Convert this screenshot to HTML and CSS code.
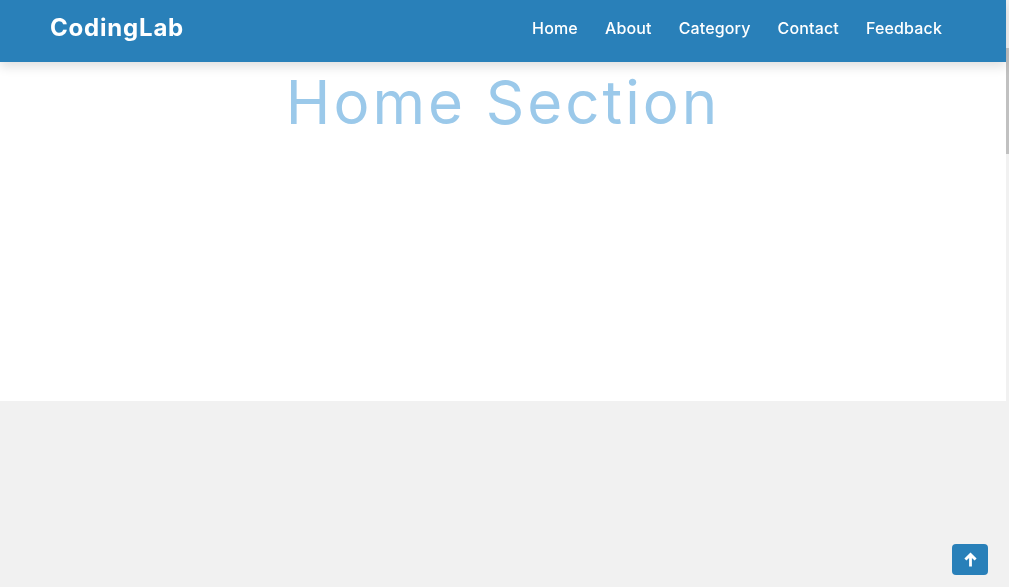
FILE: index.html
```html
<!DOCTYPE html>
<html lang="en">
<head>
<meta charset="utf-8">
<title>CodingLab</title>
<link rel="stylesheet" href="styles.css">
</head>
<body>
<div class="page">
  <header class="navbar">
    <a class="logo" href="#">CodingLab</a>
    <nav class="nav-links">
      <a href="#">Home</a>
      <a href="#">About</a>
      <a href="#">Category</a>
      <a href="#">Contact</a>
      <a href="#">Feedback</a>
    </nav>
  </header>
  <section class="home">
    <h1 class="title">Home Section</h1>
  </section>
  <section class="about"></section>
</div>
<div class="scrollbar"><div class="thumb"></div></div>
<a class="to-top" href="#" aria-label="Back to top">
  <svg width="13" height="15" viewBox="0 0 13 15" aria-hidden="true">
    <path d="M6.5 0.5 L12.6 6.6 L10.6 8.6 L7.9 5.9 L7.9 14.5 L5.1 14.5 L5.1 5.9 L2.4 8.6 L0.4 6.6 Z" fill="#fff"/>
  </svg>
</a>
</body>
</html>
```
FILE: styles.css
```css
* { box-sizing: border-box; margin: 0; padding: 0; }
html, body { height: 100%; overflow: hidden; }
body {
  font-family: "Inter", "Lato", sans-serif;
  background: #fff;
}
.page {
  width: 1006px;
  height: 587px;
  display: flex;
  flex-direction: column;
}
.navbar {
  position: fixed;
  top: 0;
  left: 0;
  width: 1006px;
  height: 62px;
  background: #2980b9;
  box-shadow: 0 5px 10px rgba(0, 0, 0, 0.12);
  display: flex;
  align-items: center;
  justify-content: space-between;
  padding: 0 64px 0 50px;
  z-index: 10;
}
.logo {
  color: #fff;
  font-size: 24px;
  font-weight: 700;
  text-decoration: none;
  letter-spacing: 0.8px;
  padding-bottom: 7px;
}
.nav-links {
  display: flex;
  gap: 27px;
  padding-bottom: 7px;
}
.nav-links a {
  color: #fff;
  text-decoration: none;
  font-size: 16px;
  font-weight: 500;
  letter-spacing: 0.15px;
}
.home {
  height: 401px;
  background: #fff;
  display: flex;
  justify-content: center;
  padding-top: 62px;
}
.title {
  color: #9bc9ea;
  font-size: 60px;
  font-weight: 400;
  line-height: 78px;
  margin-top: 1px;
  letter-spacing: 3px;
}
.about {
  flex: 1;
  background: #f1f1f1;
}
.scrollbar {
  position: fixed;
  top: 0;
  right: 0;
  width: 3px;
  height: 100%;
  background: #f1f1f1;
}
.thumb {
  margin-top: 48px;
  height: 106px;
  background: #c1c1c1;
}
.to-top {
  position: fixed;
  left: 952px;
  top: 544px;
  width: 36px;
  height: 31px;
  border-radius: 4px;
  background: #2980b9;
  display: flex;
  align-items: center;
  justify-content: center;
}
```
